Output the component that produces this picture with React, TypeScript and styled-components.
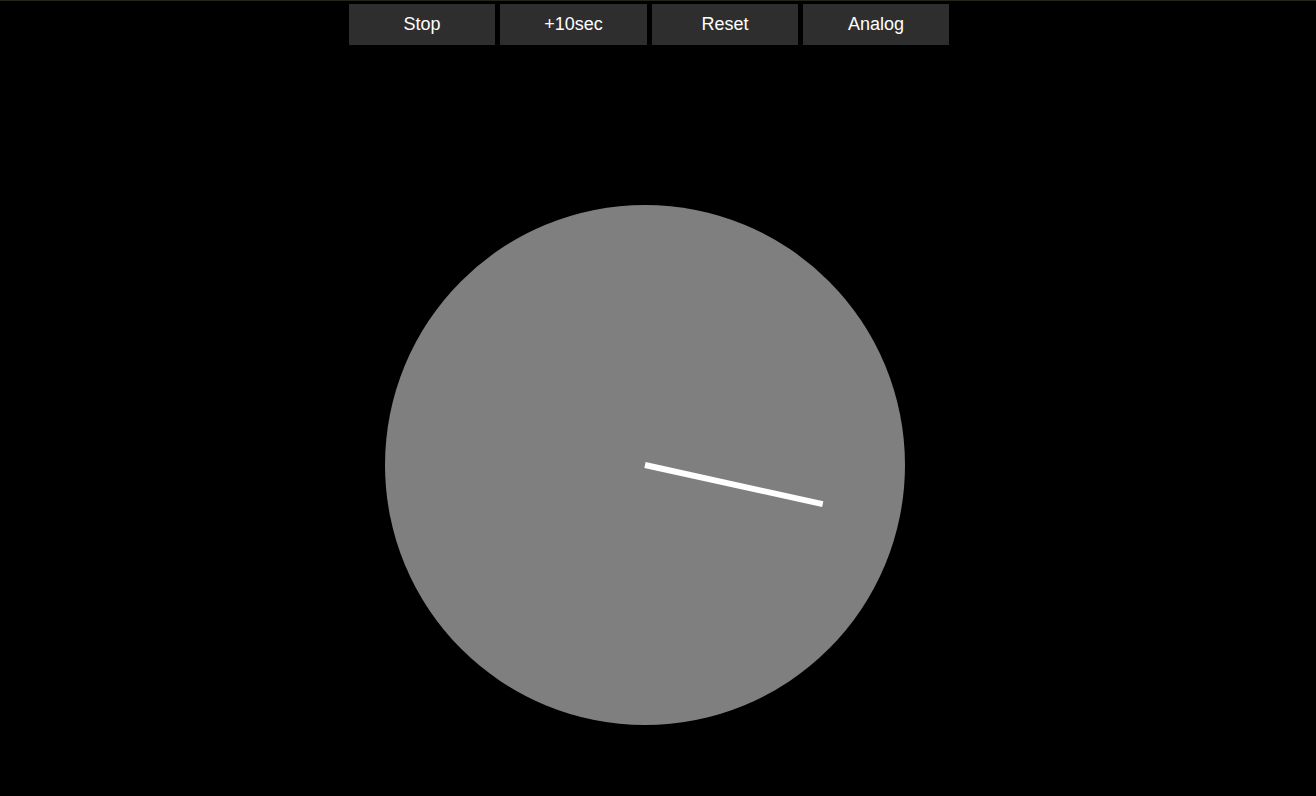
import React from 'react';
import styled, { createGlobalStyle } from 'styled-components';

const GlobalStyle = createGlobalStyle`
  html, body {
    margin: 0;
    padding: 0;
    background: #000;
  }
  body {
    font-family: "Liberation Sans", Arial, sans-serif;
    border-top: 1px solid #26231a;
    min-height: 795px;
  }
`;

const Toolbar = styled.div`
  display: flex;
  gap: 5px;
  padding: 3px 0 0 349px;
`;

const ToolButton = styled.button<{ $w?: number }>`
  width: ${({ $w }) => $w || 146}px;
  height: 41px;
  border: none;
  border-radius: 0;
  background: #2e2e2e;
  color: #fff;
  font-family: "Liberation Sans", Arial, sans-serif;
  font-size: 18px;
  padding: 0;
  cursor: pointer;
`;

const Stage = styled.div`
  padding: 160px 0 0 385px;
  svg {
    display: block;
  }
`;

const seconds = 17.07;

export default function App() {
  const angle = (seconds / 60) * 360 - 90;
  const rad = (angle * Math.PI) / 180;
  const len = 182;
  const cx = 260;
  const cy = 260;
  const x2 = cx + Math.cos(rad) * len;
  const y2 = cy + Math.sin(rad) * len;

  return (
    <>
      <GlobalStyle />
      <Toolbar>
        <ToolButton>Stop</ToolButton>
        <ToolButton $w={147}>+10sec</ToolButton>
        <ToolButton>Reset</ToolButton>
        <ToolButton>Analog</ToolButton>
      </Toolbar>
      <Stage>
        <svg width="520" height="520" viewBox="0 0 520 520">
          <circle cx={cx} cy={cy} r="260" fill="#7f7f7f" />
          <line x1={cx} y1={cy} x2={x2} y2={y2} stroke="#fff" strokeWidth="6" />
        </svg>
      </Stage>
    </>
  );
}
